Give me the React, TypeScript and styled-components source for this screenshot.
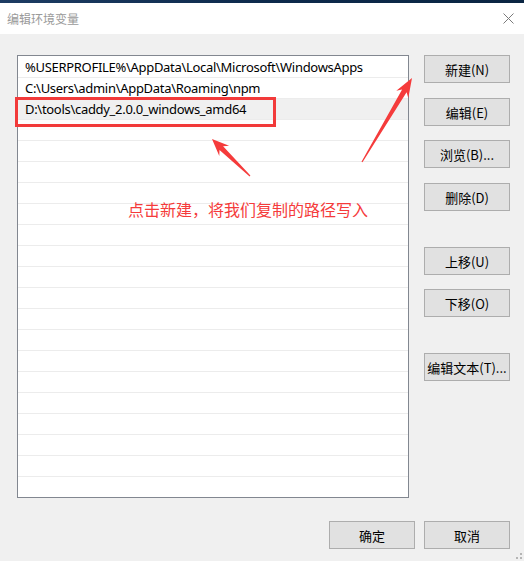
import React from "react";
import styled, { createGlobalStyle } from "styled-components";

const GlobalStyle = createGlobalStyle`
  html, body { margin: 0; padding: 0; background: #f0f0f0; }
  body { font-family: "Noto Sans", "Noto Sans CJK SC", sans-serif; }
`;

const Window = styled.div`
  position: relative;
  width: 524px;
  height: 561px;
  background: #f0f0f0;
  display: flex;
  flex-direction: column;
  overflow: hidden;
`;

const TopStrip = styled.div`
  height: 3px;
  background: linear-gradient(90deg, #1d3c63 0%, #0d2a4c 50%, #0a2542 100%);
`;

const TitleBar = styled.div`
  height: 31px;
  background: #ffffff;
  display: flex;
  align-items: center;
  justify-content: space-between;
  padding: 0 10px 0 7px;
`;

const Title = styled.span`
  font-family: "Noto Sans CJK SC", sans-serif;
  font-size: 12px;
  color: #9a9a9a;
  line-height: 1;
`;

const Body = styled.div`
  flex: 1;
  display: flex;
  flex-direction: column;
  padding: 21px 14px 0 17px;
`;

const Main = styled.div`
  display: flex;
  gap: 15px;
`;

const List = styled.div`
  width: 390px;
  height: 440px;
  border: 1px solid #828790;
  background: #ffffff;
  padding-top: 1px;
  box-sizing: content-box;
  overflow: hidden;
`;

const Row = styled.div<{ $selected?: boolean }>`
  height: 20px;
  line-height: 20px;
  border-bottom: 1px solid #ececec;
  padding-left: 7px;
  font-family: "Noto Sans", "Noto Sans CJK SC", sans-serif;
  font-size: 13px;
  letter-spacing: -0.3px;
  color: #000000;
  white-space: nowrap;
  background: ${(p) => (p.$selected ? "#f0f0f0" : "#ffffff")};
`;

const ButtonColumn = styled.div`
  display: flex;
  flex-direction: column;
`;

const Button = styled.div<{ $gap?: number }>`
  width: 86px;
  height: 28px;
  box-sizing: border-box;
  margin-top: ${(p) => p.$gap ?? 0}px;
  background: #e1e1e1;
  border: 1px solid #adadad;
  display: flex;
  align-items: center;
  justify-content: center;
  font-family: "Noto Sans CJK SC", sans-serif;
  font-size: 13px;
  color: #000000;
`;

const Footer = styled.div`
  display: flex;
  justify-content: flex-end;
  gap: 9px;
  margin-top: 23px;
`;

const HighlightBox = styled.div`
  position: absolute;
  left: 15px;
  top: 97px;
  width: 261px;
  height: 30px;
  box-sizing: border-box;
  border: 3px solid #f23a3a;
  pointer-events: none;
`;

const Annotation = styled.div`
  position: absolute;
  left: 128px;
  top: 198px;
  font-family: "Noto Sans CJK SC", sans-serif;
  font-size: 16px;
  line-height: 22px;
  color: #f53b3b;
  white-space: nowrap;
`;

const Overlay = styled.svg`
  position: absolute;
  left: 0;
  top: 0;
  pointer-events: none;
`;

const Grip = styled.svg`
  position: absolute;
  right: 2px;
  bottom: 2px;
`;

type P = [number, number];

function arrowPoints(tail: P, tip: P, headLen: number, headHalf: number, neckHalf: number, tailHalf: number) {
  const dx = tip[0] - tail[0];
  const dy = tip[1] - tail[1];
  const len = Math.hypot(dx, dy);
  const ux = dx / len;
  const uy = dy / len;
  const nx = -uy;
  const ny = ux;
  const base: P = [tip[0] - ux * headLen, tip[1] - uy * headLen];
  const neck: P = [tip[0] - ux * (headLen - 4), tip[1] - uy * (headLen - 4)];
  const pts: P[] = [
    [tail[0] + nx * tailHalf, tail[1] + ny * tailHalf],
    [neck[0] + nx * neckHalf, neck[1] + ny * neckHalf],
    [base[0] + nx * headHalf, base[1] + ny * headHalf],
    tip,
    [base[0] - nx * headHalf, base[1] - ny * headHalf],
    [neck[0] - nx * neckHalf, neck[1] - ny * neckHalf],
    [tail[0] - nx * tailHalf, tail[1] - ny * tailHalf],
  ];
  return pts.map((p) => `${p[0].toFixed(1)},${p[1].toFixed(1)}`).join(" ");
}

const entries = [
  "%USERPROFILE%\\AppData\\Local\\Microsoft\\WindowsApps",
  "C:\\Users\\admin\\AppData\\Roaming\\npm",
  "D:\\tools\\caddy_2.0.0_windows_amd64",
];

const sideButtons: { label: string; gap: number }[] = [
  { label: "新建(N)", gap: 0 },
  { label: "编辑(E)", gap: 15 },
  { label: "浏览(B)...", gap: 14 },
  { label: "删除(D)", gap: 15 },
  { label: "上移(U)", gap: 36 },
  { label: "下移(O)", gap: 14 },
  { label: "编辑文本(T)...", gap: 36 },
];

export default function App() {
  const rows = Array.from({ length: 22 }, (_, i) => entries[i] ?? "");
  return (
    <>
      <GlobalStyle />
      <Window>
        <TopStrip />
        <TitleBar>
          <Title>编辑环境变量</Title>
          <svg width="11" height="11" viewBox="0 0 11 11">
            <path d="M0.5 0.5 L10.5 10.5 M10.5 0.5 L0.5 10.5" stroke="#7a7a7a" strokeWidth="1" fill="none" />
          </svg>
        </TitleBar>
        <Body>
          <Main>
            <List>
              {rows.map((t, i) => (
                <Row key={i} $selected={i === 2}>
                  {t}
                </Row>
              ))}
            </List>
            <ButtonColumn>
              {sideButtons.map((b) => (
                <Button key={b.label} $gap={b.gap}>
                  {b.label}
                </Button>
              ))}
            </ButtonColumn>
          </Main>
          <Footer>
            <Button>确定</Button>
            <Button>取消</Button>
          </Footer>
        </Body>
        <HighlightBox />
        <Annotation>点击新建，将我们复制的路径写入</Annotation>
        <Overlay width="524" height="561" viewBox="0 0 524 561">
          <polygon points={arrowPoints([250, 176], [212, 139], 17, 7, 2.6, 0.6)} fill="#f53b3b" />
          <polygon points={arrowPoints([362, 162], [412, 78], 19, 7, 2.6, 0.6)} fill="#f53b3b" />
        </Overlay>
        <Grip width="6" height="6" viewBox="0 0 6 6">
          <rect x="4" y="0" width="2" height="2" fill="#b5b5b5" />
          <rect x="4" y="4" width="2" height="2" fill="#b5b5b5" />
          <rect x="0" y="4" width="2" height="2" fill="#b5b5b5" />
        </Grip>
      </Window>
    </>
  );
}
